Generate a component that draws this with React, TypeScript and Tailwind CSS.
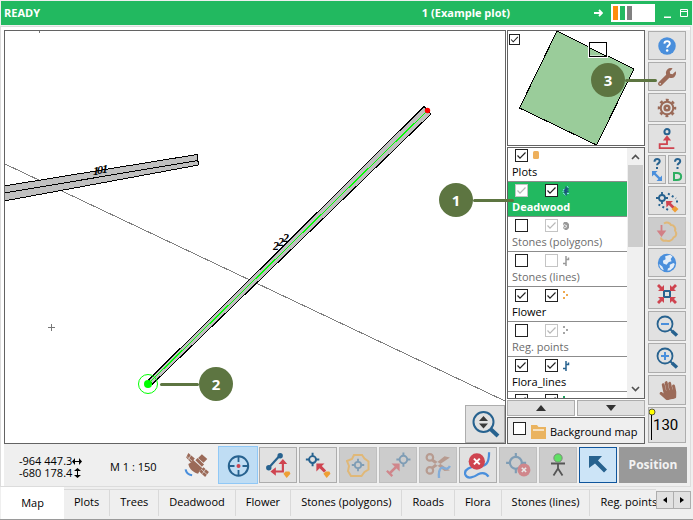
import { useState, type ReactNode } from "react";
import { FaHandPaper, FaWrench } from "react-icons/fa";

const BROWN = "#9b6a58";
const BLUE = "#27628f";
const SKY = "#4a8fdc";
const RED = "#cf4450";
const ORANGE = "#ee9f35";

function Icon({ children, size = 24 }: { children: ReactNode; size?: number }) {
  return (
    <svg width={size} height={size} viewBox="0 0 24 24" fill="none" className="shrink-0" aria-hidden="true">
      {children}
    </svg>
  );
}

function Tick({
  label,
  checked = false,
  disabled = false,
  size = "size-[13px]",
}: {
  label: string;
  checked?: boolean;
  disabled?: boolean;
  size?: string;
}) {
  const [on, setOn] = useState(checked);
  return (
    <span className={`relative block shrink-0 ${size}`}>
      <input
        type="checkbox"
        aria-label={label}
        checked={on}
        disabled={disabled}
        onChange={() => setOn(!on)}
        className="block size-full appearance-none border border-[#222] bg-white disabled:border-[#c4c4c4]"
      />
      {on && (
        <svg viewBox="0 0 13 13" className="pointer-events-none absolute inset-0 size-full" fill="none">
          <path d="M2.5 6.5 5 9.2 10.5 3.5" stroke={disabled ? "#b8b8b8" : "#222"} strokeWidth="1.2" />
        </svg>
      )}
    </span>
  );
}

type LayerSymbol = "plot" | "dead" | "poly" | "line" | "points";
type Layer = {
  name: string;
  visible: boolean;
  locked?: boolean;
  active?: boolean | null;
  activeLocked?: boolean;
  symbol: LayerSymbol;
  color: string;
  muted?: boolean;
  selected?: boolean;
};

const layers: Layer[] = [
  { name: "Plots", visible: true, active: null, symbol: "plot", color: "#eeb05c" },
  { name: "Deadwood", visible: true, locked: true, active: true, symbol: "dead", color: "#1d4f80", selected: true },
  { name: "Stones (polygons)", visible: false, active: true, activeLocked: true, symbol: "poly", color: "#999", muted: true },
  { name: "Stones (lines)", visible: false, active: false, activeLocked: true, symbol: "line", color: "#999", muted: true },
  { name: "Flower", visible: true, active: true, symbol: "points", color: "#eeaa50" },
  { name: "Reg. points", visible: false, active: true, activeLocked: true, symbol: "points", color: "#a5a5a5", muted: true },
  { name: "Flora_lines", visible: true, active: true, symbol: "line", color: BLUE },
  { name: "Flora", visible: true, active: true, symbol: "points", color: "#22a060" },
];

function SymbolIcon({ kind, color }: { kind: LayerSymbol; color: string }) {
  return (
    <svg width="10" height="10" viewBox="0 0 10 10" fill="none" aria-hidden="true">
      {kind === "plot" && <rect x="1" y="0" width="6" height="8" rx="1.5" fill={color} />}
      {kind === "dead" && (
        <>
          <path d="M1 3.500h2M5 0 6.500 2M1 7 4 9.500M5 7.500h2M.500 5.500 3 4.500" stroke="#8fdcff" strokeWidth=".9" />
          <path d="M4 .5V9.500M2 4.500 6.500 2.500M2 6.500 6.500 5" stroke={color} strokeWidth="1.400" />
        </>
      )}
      {kind === "poly" && (
        <>
          <path d="M2 1h3l2 2v4L5 9H3L1 7l1-2-1-2z" fill={color} />
          <path d="M2 3.500 5 5M2 7l3-1.500" stroke="#fff" strokeWidth=".8" />
        </>
      )}
      {kind === "line" && <path d="M4 0v10M1 7.500h3M4 3.500h2.500V1.500" stroke={color} strokeWidth="1.500" />}
      {kind === "points" && <path d="M1 0h2v2H1zM4 3h2v2H4zM1 6h2v2H1z" fill={color} />}
    </svg>
  );
}

function LayerRow({ layer }: { layer: Layer }) {
  const tone = layer.selected ? "bg-[#22b960] font-bold text-white" : layer.muted ? "text-[#6d6d6d]" : "text-black";
  return (
    <li className={`h-[35px] shrink-0 border-b border-[#8c8c8c] pt-0.5 ${tone}`}>
      <div className="flex pl-[7px]">
        <Tick label={`Show ${layer.name}`} checked={layer.visible} disabled={layer.locked} />
        {layer.active !== null && (
          <span className="ml-[17px]">
            <Tick label={`Select in ${layer.name}`} checked={layer.active} disabled={layer.activeLocked} />
          </span>
        )}
        <span className="ml-1 pt-0.5">
          <SymbolIcon kind={layer.symbol} color={layer.color} />
        </span>
      </div>
      <div className="truncate pl-1 leading-5">{layer.name}</div>
    </li>
  );
}

function ToolButton({
  label,
  children,
  className = "h-[29px] w-full",
  disabled = false,
}: {
  label: string;
  children: ReactNode;
  className?: string;
  disabled?: boolean;
}) {
  return (
    <button
      type="button"
      aria-label={label}
      disabled={disabled}
      className={`flex shrink-0 items-center justify-center border border-[#adadad] bg-[#e1e1e1] disabled:border-[#bfbfbf] disabled:bg-[#cccccc] ${className}`}
    >
      {children}
    </button>
  );
}

function Magnifier({ children }: { children?: ReactNode }) {
  return (
    <Icon>
      <circle cx="10" cy="10" r="7.500" stroke={BLUE} strokeWidth="1.800" />
      <path d="m15.500 15.500 2 2" stroke={BLUE} strokeWidth="2" />
      <path d="m17 17 5 4.500" stroke={BLUE} strokeWidth="3.500" />
      {children}
    </Icon>
  );
}

function Crosshair({ x, y, r, color = BLUE }: { x: number; y: number; r: number; color?: string }) {
  return (
    <g stroke={color} strokeWidth="1.800">
      <circle cx={x} cy={y} r={r} />
      <path d={`M${x - r - 3} ${y}h3M${x + r} ${y}h3M${x} ${y - r - 3}v3M${x} ${y + r}v3`} />
    </g>
  );
}

function SideTools() {
  return (
    <nav aria-label="View tools" className="flex w-[45px] shrink-0 flex-col gap-0.5 bg-[#efefef] pt-px pr-1 pl-[3px]">
      <ToolButton label="Help">
        <Icon size={20}>
          <circle cx="12" cy="12" r="10.500" fill={SKY} />
          <path d="M8.800 9.200c.2-4.200 6.800-4 6.600-.2-.1 2.400-3.200 2.600-3.200 5" stroke="#fff" strokeWidth="2.300" />
          <circle cx="12.200" cy="17.300" r="1.500" fill="#fff" />
        </Icon>
      </ToolButton>
      <ToolButton label="Tools">
        <FaWrench size={18} color={BROWN} />
      </ToolButton>
      <ToolButton label="Settings">
        <Icon size={20}>
          <circle cx="12" cy="12" r="7.500" stroke={BROWN} strokeWidth="2.400" />
          <circle cx="12" cy="12" r="9.600" stroke={BROWN} strokeWidth="3" strokeDasharray="3.500 4.040" strokeDashoffset="1.750" />
          <circle cx="12" cy="12" r="2.800" stroke={BROWN} strokeWidth="3" />
        </Icon>
      </ToolButton>
      <ToolButton label="Snap to point">
        <Icon size={22}>
          <circle cx="12" cy="4" r="2.800" stroke={BLUE} strokeWidth="2.200" />
          <path d="M7.500 13.500 12 8l4.500 5.500z" fill={RED} />
          <path d="M12 12v5.500H4V22h16" stroke={RED} strokeWidth="2" />
        </Icon>
      </ToolButton>
      <div className="flex gap-0.5">
        <ToolButton label="Query distance" className="h-[29px] w-[18px]">
          <svg width="14" height="25" viewBox="0 0 14 25" fill="none">
            <path d="M4.500 4.800c0-4 5.500-3.600 5.200-.4-.2 2-2.600 2-2.600 3.800M7 10v2" stroke={BLUE} strokeWidth="2" />
            <path d="m3.500 15.500 7 7" stroke={SKY} strokeWidth="2.400" />
            <path d="M2 14h5.500L2 19.500zM12 24H6.500L12 18.500z" fill={SKY} />
          </svg>
        </ToolButton>
        <ToolButton label="Query data" className="h-[29px] w-[18px]">
          <svg width="14" height="25" viewBox="0 0 14 25" fill="none">
            <path d="M5 4.800c0-4 5.500-3.600 5.200-.4-.2 2-2.600 2-2.600 3.800M7.500 10v2" stroke={BLUE} strokeWidth="2" />
            <path d="M4 16h3c5.500 0 5.500 7 0 7H4z" stroke="#2eae62" strokeWidth="2" />
          </svg>
        </ToolButton>
      </div>
      <ToolButton label="Pick nearest">
        <Icon>
          <Crosshair x={7} y={9} r={3} />
          <path d="M13 4.500l8 5M22 11.500v4M3.500 15.500l10.500 6" stroke={BLUE} strokeWidth="2" strokeDasharray="2 2.500" />
          <path d="M11 12h7l-2.200 2 4 4-2 2-4-4-2.300 2.500z" fill={RED} />
          <path d="m20 17 3.500 3-3.500 3.500-3.500-3.500z" fill={ORANGE} />
        </Icon>
      </ToolButton>
      <ToolButton label="Import polygon" disabled>
        <Icon>
          <path
            d="M9 3.500c3-2 6-.5 7 1.500 3 0 5 3 4 5.500 2 3 1.500 6-1.500 7-1 3-5 4.500-7.500 3-3 1-5-1-5-3"
            stroke="#e0b878"
            strokeWidth="2"
          />
          <path d="M6.500 5v8M3.500 11.500h6l-3 4z" stroke="#d28086" strokeWidth="1.800" fill="#d28086" />
        </Icon>
      </ToolButton>
      <ToolButton label="Show all">
        <Icon size={22}>
          <circle cx="12" cy="12" r="10" fill={SKY} />
          <path
            d="M10 4.500 15.500 3l2.500 2-2 2.500 1 2.500-3 1-2.500 3L8 12.500 7.500 9.500l3-1.500zM19 12l1.500 1-1.500 4-3.500 3-3 .5.5-2.500 2-1v-3z"
            fill="#e3edf8"
          />
          <path d="M3.500 13 7 16l1.500 4c-3-1-5-4-5-7z" fill="#e3edf8" />
        </Icon>
      </ToolButton>
      <ToolButton label="Centre" className="h-[30px] w-full">
        <Icon>
          <rect x="9" y="9" width="6" height="6" stroke={BLUE} strokeWidth="2" />
          <path
            d="M9 9H3l2-2-3-3 2-2 3 3 2-2zM15 9h6l-2-2 3-3-2-2-3 3-2-2zM9 15H3l2 2-3 3 2 2 3-3 2 2zM15 15h6l-2 2 3 3-2 2-3-3-2 2z"
            fill={RED}
          />
        </Icon>
      </ToolButton>
      <ToolButton label="Zoom out" className="h-[30px] w-full">
        <Magnifier>
          <path d="M6 10h8" stroke={SKY} strokeWidth="2" />
        </Magnifier>
      </ToolButton>
      <ToolButton label="Zoom in" className="h-[30px] w-full">
        <Magnifier>
          <path d="M6 10h8M10 6v8" stroke={SKY} strokeWidth="2" />
        </Magnifier>
      </ToolButton>
      <ToolButton label="Pan" className="h-[30px] w-full">
        <FaHandPaper size={19} color={BROWN} className="-rotate-12" />
      </ToolButton>
      <button
        type="button"
        className="flex h-9 w-full border border-[#adadad] bg-[#e1e1e1] text-base leading-[34px] text-black"
      >
        <svg width="8" height="34" viewBox="0 0 8 34" className="shrink-0" aria-hidden="true">
          <path d="M2.500 4v28" stroke="#000" />
          <circle cx="3" cy="4" r="3" fill="#ff0" stroke="#333" strokeWidth=".8" />
        </svg>
        <span className="-ml-1 font-['Roboto',sans-serif] text-[15px]">130</span>
      </button>
    </nav>
  );
}

function MapCanvas() {
  return (
    <div className="relative min-w-0 flex-1 border border-[#636363] bg-white">
      <svg viewBox="5 31 500 412" preserveAspectRatio="xMinYMin slice" className="absolute inset-0 size-full" aria-label="Map">
        <path d="M5 164 505 401" stroke="#808080" strokeWidth="1" shapeRendering="crispEdges" />
        <path d="M39.500 31v2M48 327.500h7M51.500 324v7" stroke="#777" />
        <g stroke="#000" shapeRendering="crispEdges">
          <path d="M4 186 197 154.500 198.500 165 4 201z" fill="#c0c0c0" />
          <path d="M4 193 198 160.500" />
          <path d="M148.500 380 424 106.500 431 114 152.500 384z" fill="#c0c0c0" />
        </g>
        <path d="M149 383 427 111" stroke="#00ff00" strokeWidth="1" shapeRendering="crispEdges" />
        <circle cx="427.500" cy="110.500" r="2.700" fill="#f00" />
        <circle cx="148" cy="384" r="9.500" fill="none" stroke="#00ff00" />
        <circle cx="148" cy="384" r="4" fill="#00ff00" />
        <g className="font-['Liberation_Serif',serif] text-[12px] font-bold italic">
          <text x="93 97 102" y="175 174 173">
            101
          </text>
          <text x="273 278 283" y="250 246 242">
            222
          </text>
        </g>
      </svg>
      <ToolButton label="Zoom to height" className="absolute right-0 bottom-0 h-[38px] w-10">
        <svg width="30" height="30" viewBox="0 0 30 30" fill="none" aria-hidden="true">
          <circle cx="13.500" cy="13" r="10" stroke={BLUE} strokeWidth="2" />
          <path d="m20.500 20 7.500 7" stroke={BLUE} strokeWidth="4" />
          <path d="M9 12h9l-4.500-5zM9 14.500h9l-4.500 5z" fill="#3a3a3a" />
        </svg>
      </ToolButton>
    </div>
  );
}

function Overview() {
  return (
    <div className="relative h-[116px] shrink-0 border border-[#636363] bg-white">
      <svg viewBox="508 31 136 114" className="block size-full" aria-label="Overview map">
        <path d="M557 31 634 69 596.500 145 519.500 108z" fill="#9acc9a" stroke="#000" shapeRendering="crispEdges" />
        <path d="M588 41h20v17h-20z" fill="#fff" />
        <path d="M590 48 606 55.500H590z" fill="#9acc9a" />
        <path d="M590 48 606 56M589.500 42.500h17v14h-17z" stroke="#000" fill="none" shapeRendering="crispEdges" />
      </svg>
      <div className="absolute top-[3px] left-px">
        <Tick label="Show overview" checked size="size-[11px]" />
      </div>
    </div>
  );
}

function LayerPanel() {
  return (
    <aside className="flex w-[138px] shrink-0 flex-col gap-px">
      <Overview />
      <div className="flex h-0 min-h-0 flex-1 border border-[#636363] bg-white">
        <ul className="-mt-px flex min-w-0 flex-1 flex-col overflow-hidden">
          {layers.map((layer) => (
            <LayerRow key={layer.name} layer={layer} />
          ))}
        </ul>
        <div className="flex w-[17px] shrink-0 flex-col items-center bg-[#f0f0f0] py-1.5">
          <svg width="9" height="6" viewBox="0 0 9 6" fill="none" aria-hidden="true">
            <path d="m1 5 3.500-3.500L8 5" stroke="#505050" strokeWidth="1.600" />
          </svg>
          <div className="mt-[5px] h-[82px] w-[15px] bg-[#cdcdcd]" />
          <svg width="9" height="6" viewBox="0 0 9 6" fill="none" className="mt-auto" aria-hidden="true">
            <path d="m1 1 3.500 3.500L8 1" stroke="#505050" strokeWidth="1.600" />
          </svg>
        </div>
      </div>
      <div className="flex h-4 gap-0.5">
        <ToolButton label="Move layer up" className="h-4 flex-1">
          <svg width="10" height="6" viewBox="0 0 10 6">
            <path d="M0 6 5 0l5 6z" fill="#333" />
          </svg>
        </ToolButton>
        <ToolButton label="Move layer down" className="h-4 flex-1">
          <svg width="10" height="6" viewBox="0 0 10 6">
            <path d="M0 0h10L5 6z" fill="#333" />
          </svg>
        </ToolButton>
      </div>
      <label className="flex h-[27px] shrink-0 items-start border border-[#636363] bg-[#efefef] pt-1 pl-[5px] whitespace-nowrap">
        <Tick label="Background map" />
        <svg width="16" height="14" viewBox="0 0 16 14" className="mt-[3px] ml-[5px] shrink-0" aria-hidden="true">
          <path d="M0 0h6l1.500 2H15v12H0z" fill="#eab35f" />
          <path d="M2 5h11" stroke="#fff" strokeWidth="1.200" />
        </svg>
        <span className="ml-[3px] pt-0.5">Background map</span>
      </label>
    </aside>
  );
}

const modeButton = "h-9 w-[38px]";

function BottomBar() {
  return (
    <div className="ml-[3px] flex h-[42px] items-center gap-0.5 bg-[#efefef] pr-[3px]">
      <div className="flex min-w-0 flex-1 items-center pt-1 whitespace-nowrap">
        <div className="ml-[15px] w-[91px] leading-3">
          <div className="flex items-center">
            -964 447.3
            <svg width="10" height="7" viewBox="0 0 10 7" aria-hidden="true">
              <path d="M0 3.500 3 0v3h4V0l3 3.500L7 7V4H3v3z" />
            </svg>
          </div>
          <div className="flex items-center">
            -680 178.4
            <svg width="7" height="10" viewBox="0 0 7 10" className="ml-0.5" aria-hidden="true">
              <path d="M3.500 0 7 3H4v4h3l-3.500 3L0 7h3V3H0z" />
            </svg>
          </div>
        </div>
        <div>M 1 : 150</div>
      </div>
      <button type="button" aria-label="GPS" className="mr-px flex h-9 w-[38px] shrink-0 items-center justify-center">
        <Icon size={26}>
          <g fill={BROWN}>
            <path d="m4 1 6 5-3.500 4L2 5zM18 14l5 4.500-3.500 4.500-5.500-5zM10.500 7.500l2-2 6 6-2 2z" />
            <path d="M13 5.500 16.500 2l5 4.500L18 10zM4 11l4.500-2.500 7 7L13 20c-4-1-8-4-9-9z" />
            <path d="m8 7 9 8-2 2-9-8z" />
          </g>
          <path d="M3 4.500 7.500 8.500M7 2 4 7M17 20l3.500-5M16 16l5.500 5" stroke="#efefef" strokeWidth=".6" />
          <path d="M1.500 16c.5 3 2.500 5 6 5.500" stroke={SKY} strokeWidth="2" />
        </Icon>
      </button>
      <button
        type="button"
        aria-label="Centre on position"
        aria-pressed="true"
        className="-mx-px flex h-[38px] w-10 shrink-0 items-center justify-center border border-[#90c8f6] bg-[#bfddf4]"
      >
        <Icon>
          <circle cx="12.500" cy="13" r="9.700" stroke={BLUE} strokeWidth="2" />
          <path d="M12.500 3v6M12.500 17v6M2.500 13h6M16.500 13h6" stroke={BLUE} strokeWidth="1.800" />
          <circle cx="12.500" cy="13" r="2" fill={RED} />
        </Icon>
      </button>
      <ToolButton label="Add line" className={modeButton}>
        <Icon size={26}>
          <path d="M3.500 14.500 13.500 3.500" stroke={BLUE} strokeWidth="2" />
          <circle cx="3.500" cy="14.500" r="2.500" fill={BLUE} />
          <circle cx="14" cy="3.500" r="2.500" fill={BLUE} />
          <path d="M9 18h7.500V9" stroke={RED} strokeWidth="2" />
          <path d="M5 18l5-4v8zM12.500 11h8l-4-4.500z" fill={RED} />
          <path d="m17 20 2-2h3.500l1 2-3.500 4z" fill={ORANGE} />
        </Icon>
      </ToolButton>
      <ToolButton label="Add point" className={modeButton}>
        <Icon size={26}>
          <Crosshair x={7} y={7} r={3.2} />
          <path d="M10.500 10.500h7.500l-2.500 2.500 4 4-2 2-4-4-3 3z" fill={RED} />
          <path d="m17 20 2-2h3.500l1 2-3.500 4z" fill={ORANGE} />
        </Icon>
      </ToolButton>
      <ToolButton label="Add polygon" className={modeButton} disabled>
        <Icon>
          <path d="M8 2h8l2.500 3.500 4 3v8l-4 2.500-3 4H5l-3-5 1-5-2-5 5-2z" stroke="#e0b878" strokeWidth="2" />
          <Crosshair x={12} y={12} r={3.2} color="#7f9db5" />
        </Icon>
      </ToolButton>
      <ToolButton label="Move point" className={modeButton} disabled>
        <Icon size={26}>
          <Crosshair x={17} y={7} r={3.5} color="#7f9db5" />
          <path d="m4 20 7-7" stroke="#d0868b" strokeWidth="2.500" />
          <path d="M6 10.500h7.500V18zM1 18l5 5 1.500-1.500-5-5z" fill="#d0868b" />
        </Icon>
      </ToolButton>
      <ToolButton label="Cut line" className={modeButton} disabled>
        <Icon size={26}>
          <g stroke="#b79b90" strokeWidth="2">
            <circle cx="4.500" cy="5" r="3" />
            <circle cx="4.500" cy="17" r="3" />
          </g>
          <path d="M7 6 23 17l-5 .5L6 8.500zM7 16 23 5l-5-1L6 13.500z" fill="#b79b90" />
          <path d="M13 24c-1-8 2-11 5-9 2 1 4 0 5-2" stroke="#83acd8" strokeWidth="2.200" />
        </Icon>
      </ToolButton>
      <ToolButton label="Delete line" className={modeButton}>
        <Icon size={28}>
          <path d="M21.500 1c0 10-3 12-8 12C5 13 0 16 1 20c2 5 8 2 11 0 4-2 7-1 9 2" stroke={SKY} strokeWidth="1.900" />
          <circle cx="11" cy="9" r="7" fill={RED} />
          <path d="m8.500 6.500 5 5M13.500 6.500l-5 5" stroke="#fff" strokeWidth="1.700" />
        </Icon>
      </ToolButton>
      <ToolButton label="Delete point" className={modeButton} disabled>
        <Icon size={26}>
          <circle cx="10" cy="10" r="5.500" stroke="#7f9db5" strokeWidth="2" />
          <path d="M1 10h4M15.500 10h4M10 1v4M10 15.500v4" stroke="#7f9db5" strokeWidth="2" />
          <circle cx="17.500" cy="16.500" r="6" fill="#d0868b" />
          <path d="m15.500 14.500 4 4M19.500 14.500l-4 4" stroke="#e8e8e8" strokeWidth="1.500" />
        </Icon>
      </ToolButton>
      <ToolButton label="Observer" className={modeButton} disabled>
        <Icon>
          <path d="M5 10.500h14M12 10v6M12 15.500 7.500 22.500M12 15.500l4.500 7" stroke="#555" strokeWidth="1.800" />
          <circle cx="12" cy="5" r="4.200" fill="#5fe063" stroke="#777" strokeWidth=".8" />
        </Icon>
      </ToolButton>
      <button
        type="button"
        aria-label="Select"
        aria-pressed="true"
        className="flex h-9 w-[38px] shrink-0 items-center justify-center border border-[#0f559c] bg-[#cce4f7]"
      >
        <svg width="20" height="20" viewBox="0 0 20 20" aria-hidden="true">
          <path d="M1 1h13l-4 4.500 9 9-3 3-9-9L1 13z" fill={BLUE} />
        </svg>
      </button>
      <button type="button" className="h-9 w-[68px] shrink-0 bg-[#999] text-[12px] font-bold text-[#f2f2f2]">
        Position
      </button>
    </div>
  );
}

const tabs = ["Plots", "Trees", "Deadwood", "Flower", "Stones (polygons)", "Roads", "Flora", "Stones (lines)", "Reg. points"];

function Tabs() {
  return (
    <div className="flex h-[33px] shrink-0 border-b border-[#9a9a9a] bg-[#efefef] pl-px">
      <div role="tablist" className="flex min-w-0 flex-1 overflow-hidden whitespace-nowrap">
        <button type="button" role="tab" aria-selected="true" className="w-[63px] shrink-0 bg-white pt-px text-center">
          Map
        </button>
        {tabs.map((tab) => (
          <button
            key={tab}
            type="button"
            role="tab"
            aria-selected="false"
            className="mt-0.5 mb-[3px] shrink-0 border-t border-r border-[#d9d9d9] px-2.5 pb-0.5"
          >
            {tab}
          </button>
        ))}
      </div>
      <div className="mt-1 mr-0.5 flex h-[18px] shrink-0">
        <ToolButton label="Previous tabs" className="-mr-px h-[18px] w-[18px]">
          <svg width="4" height="6" viewBox="0 0 4 6">
            <path d="M4 0v6L0 3z" />
          </svg>
        </ToolButton>
        <ToolButton label="Next tabs" className="h-[18px] w-[18px]">
          <svg width="4" height="6" viewBox="0 0 4 6">
            <path d="M0 0v6l4-3z" />
          </svg>
        </ToolButton>
      </div>
    </div>
  );
}

function Callout({ n, className, reverse = false, line }: { n: number; className: string; reverse?: boolean; line: string }) {
  return (
    <div className={`pointer-events-none absolute flex items-center ${reverse ? "flex-row-reverse" : ""} ${className}`}>
      <span className="flex size-[34px] items-center justify-center rounded-full bg-[#5d7541] font-['Noto_Sans',sans-serif] text-[15px] font-bold text-white">
        {n}
      </span>
      <span className={`h-[3px] rounded-full bg-[#5d7541] ${line}`} />
    </div>
  );
}

export default function App() {
  return (
    <div className="relative flex h-screen min-h-[480px] flex-col overflow-hidden bg-[#efefef] font-['Open_Sans',sans-serif] text-[11px] text-black">
      <header className="mx-px mt-px flex h-6 shrink-0 items-center bg-[#22b960] pl-[3px] font-bold text-white">
        <span className="flex-1">READY</span>
        <span>1 (Example plot)</span>
        <div className="ml-[84px] flex items-center">
          <svg width="9" height="8" viewBox="0 0 9 8" fill="none" aria-hidden="true">
            <path d="M0 4h7M5 1l3 3-3 3" stroke="#fff" strokeWidth="1.800" />
          </svg>
          <div className="ml-2 flex h-[18px] w-11 gap-0.5 bg-white p-0.5">
            <span className="w-[5px] bg-[#ff8c0c]" />
            <span className="w-[5px] bg-[#22b960]" />
            <span className="w-[5px] bg-[#808080]" />
          </div>
          <button type="button" aria-label="Minimise" className="ml-[9px]">
            <svg width="7" height="9" viewBox="0 0 7 9">
              <path d="M0 7.500h7v1.500H0z" fill="#fff" />
            </svg>
          </button>
          <button type="button" aria-label="Restore" className="mr-1 ml-[9px]">
            <svg width="8" height="8" viewBox="0 0 8 8" fill="none">
              <path d="M.5.5h7v7h-7zM0 2.500h8" stroke="#fff" />
            </svg>
          </button>
        </div>
      </header>
      <main className="mt-px mr-0.5 flex min-h-0 flex-1 flex-col border border-[#dcdcdc] bg-white">
        <div className="flex min-h-0 flex-1 gap-px pt-[3px] pl-[3px]">
          <MapCanvas />
          <div className="flex">
            <LayerPanel />
            <SideTools />
          </div>
        </div>
        <BottomBar />
      </main>
      <Tabs />
      <Callout n={1} className="top-[183px] right-[179px]" line="w-[41px]" />
      <Callout n={2} className="top-[367px] left-[160px]" reverse line="w-[39px]" />
      <Callout n={3} className="top-[63px] right-[36px]" line="w-8" />
    </div>
  );
}
